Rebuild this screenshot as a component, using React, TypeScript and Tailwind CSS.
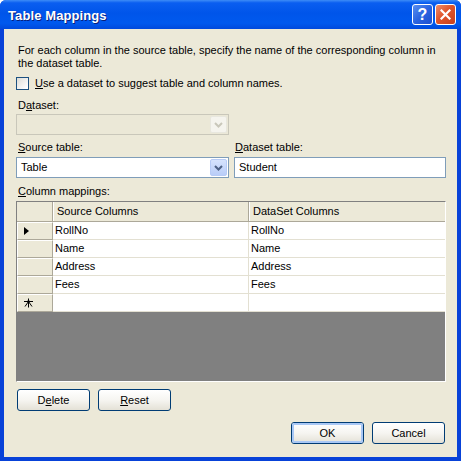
import React from 'react';

const rows = ['RollNo', 'Name', 'Address', 'Fees'];

function Key({ children }: { children: React.ReactNode }) {
  return <span className="underline underline-offset-[1px]">{children}</span>;
}

function Chevron({ color }: { color: string }) {
  return (
    <svg width="9" height="6" viewBox="0 0 9 6">
      <path d="M1 1l3.5 3.5L8 1" fill="none" stroke={color} strokeWidth="2" />
    </svg>
  );
}

function ComboBox({ value, disabled }: { value?: string; disabled?: boolean }) {
  return (
    <div
      className={`h-[21px] flex border ${
        disabled ? 'border-[#c9c7ba] bg-[#ebe8d7]' : 'border-[#7f9db9] bg-white'
      }`}
    >
      <div className="flex-1 flex items-center pl-[4px] leading-[13px]">{value}</div>
      <div className="p-[1px] flex">
        <div
          className={`w-[17px] rounded-[2px] border flex items-center justify-center ${
            disabled
              ? 'border-[#e8e7de] bg-[#f5f4ee]'
              : 'border-[#b7cbf6] bg-[linear-gradient(180deg,#d6e3fd_0%,#b9cdf8_100%)]'
          }`}
        >
          <Chevron color={disabled ? '#c9c7ba' : '#4d6185'} />
        </div>
      </div>
    </div>
  );
}

function XpButton({ children, focused }: { children: React.ReactNode; focused?: boolean }) {
  return (
    <div className="w-[73px] h-[22px] rounded-[3px] border border-[#003c74] bg-[linear-gradient(180deg,#ffffff_0%,#f6f5f1_50%,#e4e1d6_100%)] flex">
      <div
        className={`flex-1 rounded-[2px] flex items-center justify-center leading-[13px] ${
          focused ? 'border-[2px] border-[#a9c8f5]' : ''
        }`}
      >
        {children}
      </div>
    </div>
  );
}

function TitleBar() {
  return (
    <div className="h-[29px] shrink-0 flex items-center pl-[8px] pr-[5px] rounded-t-[6px] bg-[linear-gradient(180deg,#3d8cf7_0%,#0a5ef0_10%,#0055ea_45%,#0059ee_80%,#0049dc_100%)]">
      <span className="flex-1 text-white font-bold text-[13px] leading-[16px] pt-[3px] tracking-[0.1px] [text-shadow:1px_1px_0_#0a1e7a]">
        Table Mappings
      </span>
      <div className="flex gap-[2px]">
        <div className="w-[21px] h-[21px] rounded-[3px] border border-white bg-[linear-gradient(135deg,#5a8ff0_0%,#2a64e0_50%,#1d4fd0_100%)] flex items-center justify-center text-white font-bold text-[16px] leading-[16px]">
          ?
        </div>
        <div className="w-[21px] h-[21px] rounded-[3px] border border-white bg-[linear-gradient(135deg,#f08f6c_0%,#e0552c_45%,#c8401c_100%)] flex items-center justify-center">
          <svg width="11" height="11" viewBox="0 0 11 11">
            <path d="M1.5 1.5l8 8M9.5 1.5l-8 8" stroke="#fff" strokeWidth="2.2" strokeLinecap="square" />
          </svg>
        </div>
      </div>
    </div>
  );
}

function RowHeader({ children }: { children?: React.ReactNode }) {
  return (
    <div className="w-[36px] h-[18px] shrink-0 bg-[#ece9d8] border-t border-l border-t-white border-l-white border-r border-b border-r-[#aca899] border-b-[#aca899] flex items-center pl-[5px]">
      {children}
    </div>
  );
}

function DataGrid() {
  return (
    <div className="h-[181px] border border-t-[#808080] border-l-[#808080] border-b-white border-r-white flex flex-col bg-[#808080]">
      <div className="h-[20px] flex bg-[#ece9d8] border-b border-b-[#aca899]">
        <div className="w-[36px] shrink-0 border-r border-r-[#aca899]" />
        <div className="w-[196px] shrink-0 border-l border-l-white border-r border-r-[#aca899] flex items-center pl-[3px]">
          Source Columns
        </div>
        <div className="flex-1 border-l border-l-white flex items-center pl-[3px]">DataSet Columns</div>
      </div>
      {rows.map((r, i) => (
        <div key={r} className="h-[18px] flex">
          <RowHeader>
            {i === 0 && (
              <svg width="6" height="8" viewBox="0 0 6 8" className="ml-[1px]">
                <path d="M0 0L5 4L0 8Z" fill="#000" />
              </svg>
            )}
          </RowHeader>
          <div className="w-[196px] shrink-0 bg-white border-r border-b border-[#e3e0d2] flex items-center pl-[2px]">
            {r}
          </div>
          <div className="flex-1 bg-white border-b border-[#e3e0d2] flex items-center pl-[2px]">{r}</div>
        </div>
      ))}
      <div className="h-[18px] flex">
        <RowHeader>
          <svg width="11" height="10" viewBox="0 0 11 10">
            <path
              d="M5.5 0.5v9M1 3.5h9M2 8.5l3.5-5 3.5 5"
              stroke="#000"
              strokeWidth="1"
              fill="none"
            />
            <rect x="4.5" y="2.5" width="2" height="2" fill="#000" />
          </svg>
        </RowHeader>
        <div className="w-[196px] shrink-0 bg-white border-r border-b border-[#e3e0d2]" />
        <div className="flex-1 bg-white border-b border-[#e3e0d2]" />
      </div>
      <div className="flex-1 bg-[#808080]" />
    </div>
  );
}

export default function App() {
  return (
    <div className="w-[461px] h-[461px] flex flex-col bg-[#0842d8] rounded-t-[6px] font-['Liberation_Sans',Arial,sans-serif] text-[11px] leading-[13px] text-black">
      <TitleBar />
      <div className="flex-1 mx-[4px] mb-[4px] bg-[#ece9d8] pl-[12px] pr-[11px] pt-[15px] flex flex-col">
        <p className="pl-[2px]">
          For each column in the source table, specify the name of the corresponding column in
          <br />
          the dataset table.
        </p>

        <div className="mt-[7px] flex items-center gap-[6px]">
          <div className="w-[13px] h-[13px] border border-[#1c5180] bg-[linear-gradient(135deg,#dcdcd7_0%,#ffffff_90%)]" />
          <span>
            <Key>U</Key>se a dataset to suggest table and column names.
          </span>
        </div>

        <div className="mt-[9px] pl-[2px] w-[213px]">
          D<Key>a</Key>taset:
        </div>
        <div className="mt-[2px] w-[213px]">
          <ComboBox disabled />
        </div>

        <div className="mt-[6px] flex gap-[5px]">
          <div className="w-[213px] flex flex-col">
            <div className="pl-[2px]">
              <Key>S</Key>ource table:
            </div>
            <div className="mt-[3px]">
              <ComboBox value="Table" />
            </div>
          </div>
          <div className="flex-1 flex flex-col">
            <div className="pl-[1px]">
              <Key>D</Key>ataset table:
            </div>
            <div className="mt-[3px] h-[21px] border border-[#7f9db9] bg-white flex items-center pl-[4px]">
              Student
            </div>
          </div>
        </div>

        <div className="mt-[7px] pl-[2px]">
          <Key>C</Key>olumn mappings:
        </div>
        <div className="mt-[3px]">
          <DataGrid />
        </div>

        <div className="mt-[7px] ml-[1px] flex gap-[8px]">
          <XpButton>
            D<Key>e</Key>lete
          </XpButton>
          <XpButton>
            <Key>R</Key>eset
          </XpButton>
        </div>

        <div className="mt-[11px] mr-[1px] flex justify-end gap-[8px]">
          <XpButton focused>OK</XpButton>
          <XpButton>Cancel</XpButton>
        </div>
      </div>
    </div>
  );
}
